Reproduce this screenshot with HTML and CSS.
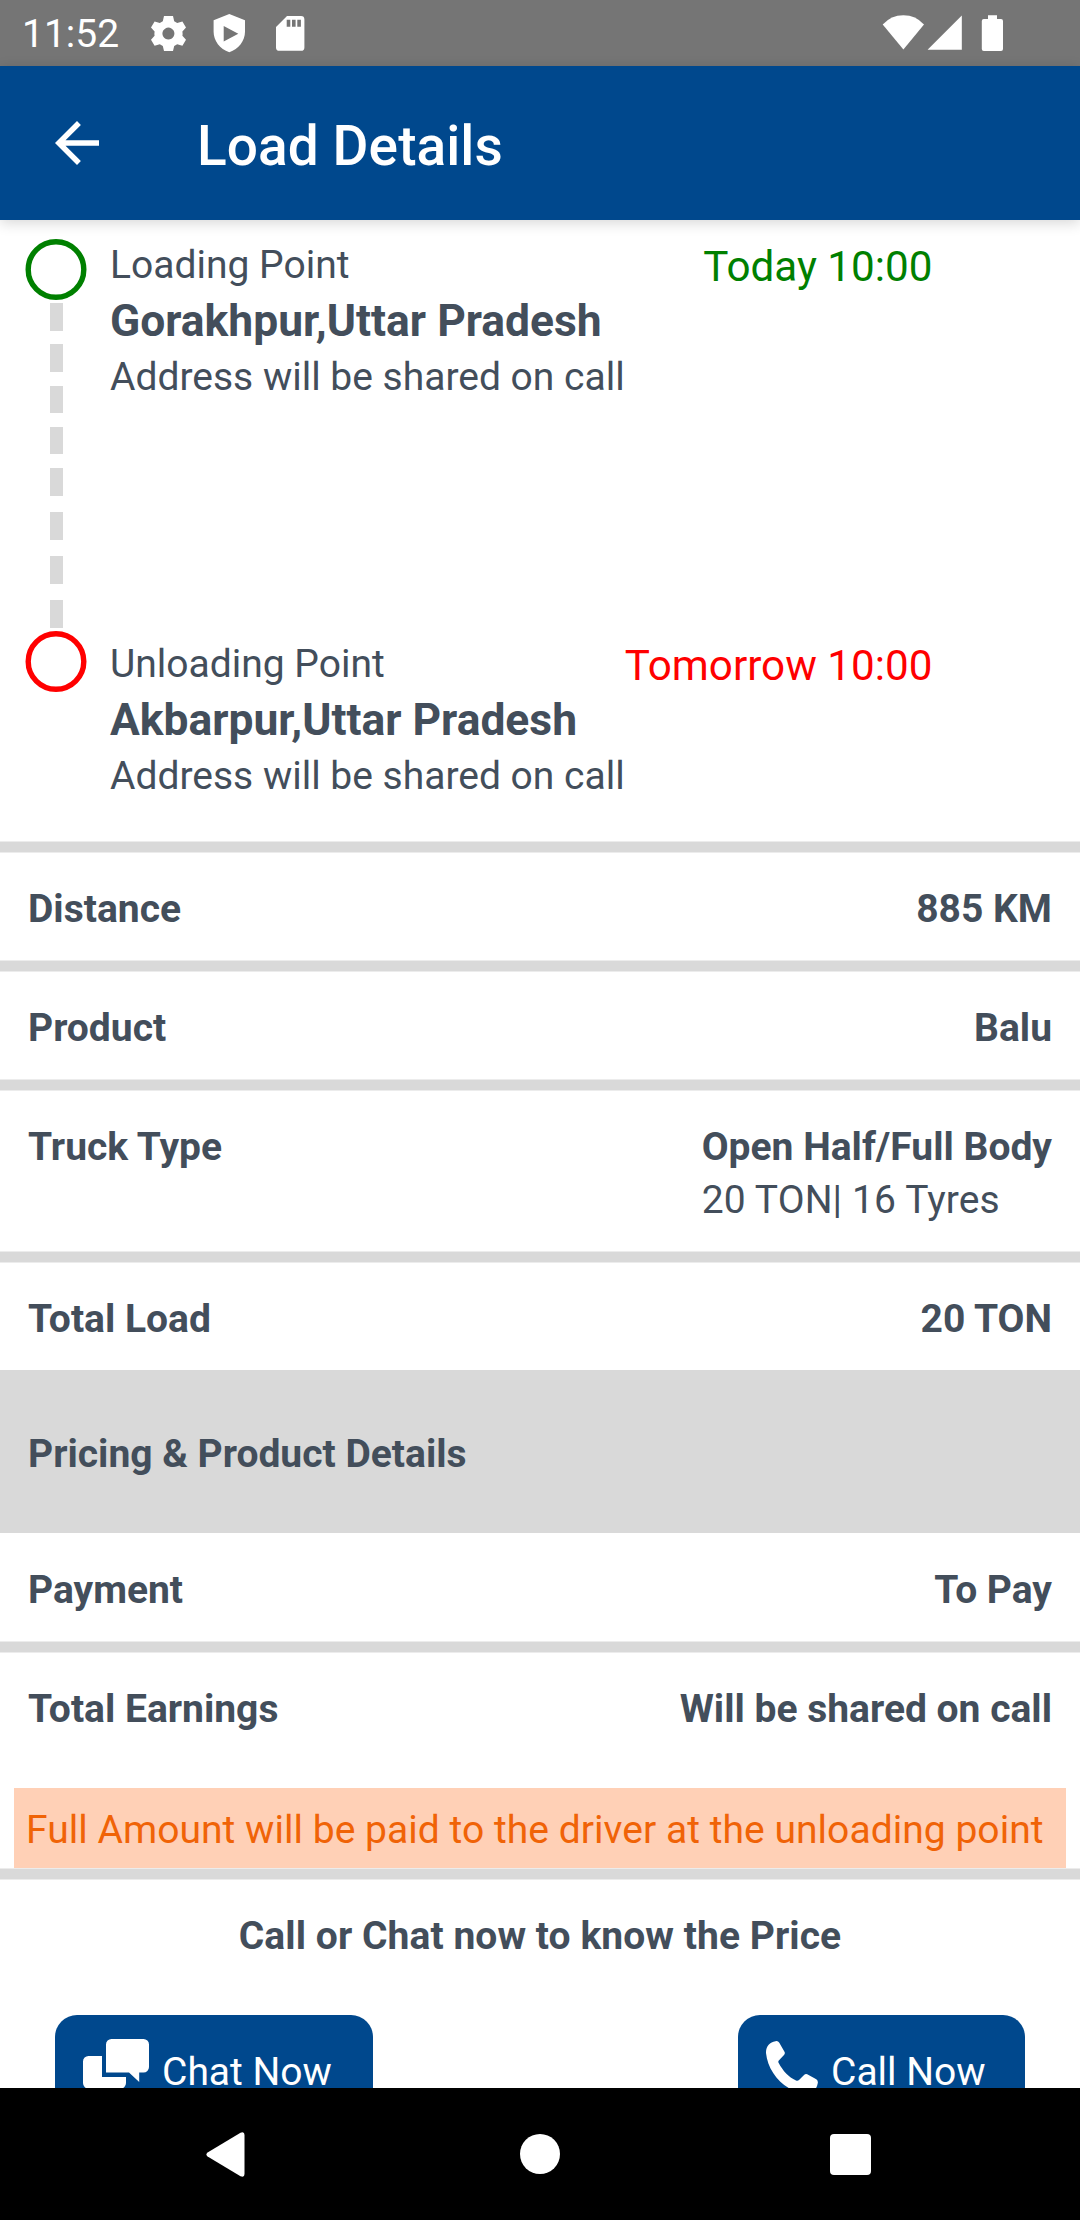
FILE: index.html
```html
<!DOCTYPE html>
<html lang="en">
<head>
<meta charset="utf-8">
<title>Load Details</title>
<link rel="stylesheet" href="styles.css">
</head>
<body>
<div class="screen">
  <div class="status-bar">
    <span class="clock">11:52</span>
    <svg class="status-left" width="156" height="44" viewBox="150 12 156 44">
      <path fill="#fff" fill-rule="evenodd" d="M164 16h9l1.2 5.2 3 1.7 5.2-1.5 3.6 6-3.6 4a13 13 0 0 1 0 4.4l3.6 4-3.6 6-5.2-1.5-3 1.700-1.200 5h-9l-1.200-5-3-1.700-5.200 1.500-3.600-6 3.600-4a13 13 0 0 1 0-4.400l-3.600-4 3.600-6 5.200 1.500 3-1.700zM168.400 27.600a6 6 0 1 0 .01 0z"/>
      <path fill="#fff" fill-rule="evenodd" d="M229.300 14l15.700 6.200v11.500c0 9-6.200 17.300-15.700 20.500-9.500-3.200-15.700-11.500-15.700-20.500V20.200zM223.700 26v15.500l14.600-7.800z"/>
      <path fill="#fff" fill-rule="evenodd" d="M287 16h14a3.400 3.400 0 0 1 3.400 3.400v28a3.400 3.400 0 0 1-3.400 3.400h-21.600a3.400 3.400 0 0 1-3.400-3.400V27zM286.700 19.700v7h3.600v-7zM292 19.700v7h3.600v-7zM297.300 19.700v7h3.600v-7z"/>
    </svg>
    <svg class="status-right" width="124" height="44" viewBox="881 12 124 44">
      <path fill="#fff" d="M882.700 24.500Q891 15.200 903.400 15.200T924 24.500L903.400 49.500z"/>
      <path fill="#fff" d="M961.800 15.500v34.200h-34.200z"/>
      <path fill="#fff" d="M988 15.200h9v3.700h4a2 2 0 0 1 2 2v28a2 2 0 0 1-2 2h-17.200a2 2 0 0 1-2-2v-28a2 2 0 0 1 2-2h4.200z"/>
    </svg>
  </div>

  <header class="app-bar">
    <svg class="back" width="66" height="66" viewBox="0 0 24 24"><path fill="#fff" d="M20 11H7.830l5.590-5.590L12 4l-8 8 8 8 1.410-1.410L7.830 13H20v-2z"/></svg>
    <h1 class="title">Load Details</h1>
  </header>

  <main class="content">
    <section class="route">
      <svg class="rail" width="62" height="456" viewBox="0 0 62 456">
        <circle cx="31" cy="31.500" r="27.800" fill="none" stroke="#008000" stroke-width="5.400"/>
        <g fill="#d9d9d9">
          <rect x="25" y="65" width="13" height="28"/>
          <rect x="25" y="106" width="13" height="28"/>
          <rect x="25" y="148" width="13" height="27"/>
          <rect x="25" y="189" width="13" height="27"/>
          <rect x="25" y="230" width="13" height="28"/>
          <rect x="25" y="274" width="13" height="28"/>
          <rect x="25" y="318" width="13" height="28"/>
          <rect x="25" y="362" width="13" height="28"/>
        </g>
        <circle cx="31" cy="423.500" r="27.800" fill="none" stroke="#ff0000" stroke-width="5.400"/>
      </svg>
      <div class="stops">
        <div class="stop">
          <div class="place">
            <div class="kind">Loading Point</div>
            <div class="city">Gorakhpur,Uttar Pradesh</div>
            <div class="kind">Address will be shared on call</div>
          </div>
          <div class="time time-load">Today 10:00</div>
        </div>
        <div class="stop">
          <div class="place">
            <div class="kind">Unloading Point</div>
            <div class="city">Akbarpur,Uttar Pradesh</div>
            <div class="kind">Address will be shared on call</div>
          </div>
          <div class="time time-unload">Tomorrow 10:00</div>
        </div>
      </div>
    </section>

    <div class="divider"></div>
    <div class="row"><span>Distance</span><span>885 KM</span></div>
    <div class="divider"></div>
    <div class="row"><span>Product</span><span>Balu</span></div>
    <div class="divider"></div>
    <div class="row row-truck">
      <span>Truck Type</span>
      <div class="truck"><span>Open Half/Full Body</span><span class="regular">20 TON| 16 Tyres</span></div>
    </div>
    <div class="divider"></div>
    <div class="row"><span>Total Load</span><span>20 TON</span></div>
    <h2 class="section-title">Pricing &amp; Product Details</h2>
    <div class="row row-payment"><span>Payment</span><span>To Pay</span></div>
    <div class="divider"></div>
    <div class="row row-earnings"><span>Total Earnings</span><span>Will be shared on call</span></div>
    <div class="notice">Full Amount will be paid to the driver at the unloading point</div>
    <div class="divider"></div>
    <div class="prompt">Call or Chat now to know the Price</div>
    <div class="actions">
      <div class="button button-chat">
        <svg width="66" height="64" viewBox="83 2039 66 64"><path fill="#fff" d="M111.500 2039H143.500a5.500 5.500 0 0 1 5.500 5.500V2067a5.500 5.500 0 0 1-5.500 5.500H139.200V2082L129 2072.500H106V2044.500a5.500 5.500 0 0 1 5.500-5.500zM88.500 2056H102V2077H126V2083a5.500 5.500 0 0 1-5.500 5.500H103L92 2098V2088.500H88.500a5.500 5.500 0 0 1-5.500-5.500V2061.500a5.500 5.500 0 0 1 5.500-5.500z"/></svg>
        <span>Chat Now</span>
      </div>
      <div class="button button-call">
        <svg width="52" height="54" viewBox="766 2041 52 54"><path fill="#fff" d="M775.500 2041.200Q778 2040.600 779.300 2042.700L784.600 2052Q785.300 2053.600 784 2055L778.600 2060.700Q778 2061.600 778.700 2063C783 2071 788.500 2077 796 2080.500Q797.800 2081.200 799 2080L804.300 2074.700Q805.500 2073.500 807.200 2074.200L816.300 2079.300Q818.200 2080.500 817.800 2083C816.500 2090 812 2095 804 2094C784 2090 768 2073 766 2053C765.800 2046.500 769.500 2042.300 775.500 2041.200z"/></svg>
        <span>Call Now</span>
      </div>
    </div>
  </main>

  <nav class="nav-bar">
    <svg width="39" height="45" viewBox="0 0 39 45"><path fill="#fff" d="M1.600 20.500L34.500.8Q38.500-.8 38.500 3V42Q38.500 45.800 34.500 44.200L1.600 24.500Q-.8 22.500 1.600 20.500z"/></svg>
    <svg class="home" width="40" height="40" viewBox="0 0 40 40"><circle cx="20" cy="20" r="20" fill="#fff"/></svg>
    <svg width="41" height="41" viewBox="0 0 41 41"><rect width="41" height="41" rx="4" fill="#fff"/></svg>
  </nav>
</div>
</body>
</html>
```
FILE: styles.css
```css
* {
  box-sizing: border-box;
}

body {
  margin: 0;
  background: #fff;
  color: #434e5b;
  font-family: Roboto, "Noto Sans", sans-serif;
  font-size: 39px;
  line-height: 46px;
}

svg {
  display: block;
  flex: none;
}

.screen {
  display: flex;
  flex-direction: column;
  width: 1080px;
  height: 2220px;
  overflow: hidden;
}

.status-bar {
  display: flex;
  align-items: center;
  flex: none;
  height: 66px;
  padding: 2px 75px 0 22px;
  background: #757575;
  color: #fff;
}

.clock {
  width: 128px;
  font-size: 39px;
  line-height: 66px;
}

.status-right {
  margin-left: auto;
}

.app-bar {
  position: relative;
  display: flex;
  align-items: center;
  flex: none;
  height: 154px;
  padding-left: 44px;
  background: #00488d;
  color: #fff;
  box-shadow: 0 3px 13px rgba(0, 0, 0, 0.16);
}

.title {
  margin: 6px 0 0 87px;
  font-size: 55px;
  font-weight: 500;
  line-height: 64px;
  letter-spacing: 0.08px;
}

.content {
  flex: 1;
  min-height: 0;
  overflow: hidden;
}

.route {
  display: flex;
  height: 621px;
  padding: 18px 151px 0 25px;
}

.stops {
  flex: 1;
  margin: 2px 0 0 23px;
}

.stop {
  display: flex;
  justify-content: space-between;
  height: 399px;
  white-space: nowrap;
}

.kind {
  line-height: 50px;
}

.city {
  font-size: 44.400px;
  font-weight: 700;
  line-height: 62px;
}

.time {
  font-size: 42.200px;
  line-height: 54px;
}

.time-load {
  color: #008000;
}

.time-unload {
  color: #ff0000;
}

.divider {
  height: 12px;
  border: solid #ececec;
  border-width: 1px 0;
  background: #d9d9d9;
}

.row {
  display: flex;
  justify-content: space-between;
  height: 107px;
  padding: 33px 28px 0;
  font-weight: 700;
}

.row-truck {
  height: 160px;
}

.truck {
  display: flex;
  flex-direction: column;
  gap: 7px;
}

.regular {
  font-weight: 400;
  letter-spacing: 0.12px;
}

.section-title {
  height: 163px;
  margin: 0;
  padding: 61px 28px 0;
  background: #d9d9d9;
  font-size: 39px;
  font-weight: 700;
}

.row-payment {
  height: 108px;
  padding-top: 34px;
}

.row-earnings {
  height: 135px;
}

.notice {
  height: 80px;
  margin: 0 14px;
  padding: 19px 12px 0;
  background: #ffd0b6;
  color: #f06307;
  letter-spacing: 0.04px;
  white-space: nowrap;
}

.prompt {
  padding-top: 33px;
  font-weight: 700;
  letter-spacing: 0.06px;
  text-align: center;
}

.actions {
  display: flex;
  justify-content: space-between;
  padding: 56px 55px 0;
}

.button {
  display: flex;
  align-items: flex-start;
  height: 113px;
  padding: 24px 0 0 28px;
  border-radius: 22px;
  background: #00488d;
  color: #fff;
}

.button span {
  margin: 10px 0 0 13px;
}

.button-chat {
  width: 318px;
}

.button-call {
  width: 287px;
  padding-top: 26px;
}

.button-call span {
  margin-top: 8px;
}

.nav-bar {
  display: flex;
  align-items: center;
  flex: none;
  height: 132px;
  padding: 0 209px 0 206px;
  background: #000;
}

.home {
  margin: 0 270px 0 275px;
}
```
